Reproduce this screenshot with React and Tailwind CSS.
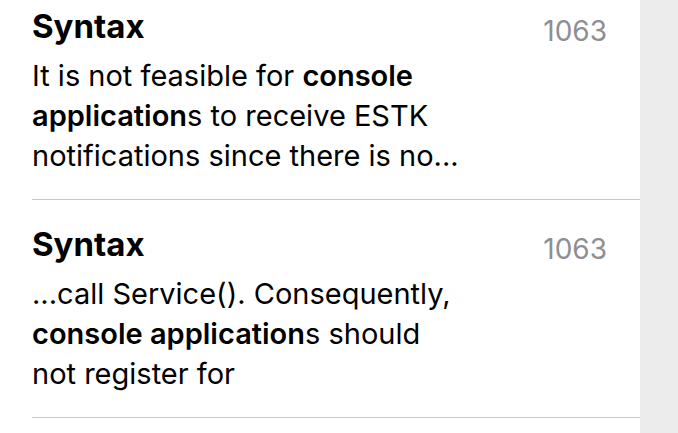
const rows = [
  {
    title: 'Syntax',
    count: '1063',
    body: (
      <>
        It is not feasible for <b className="font-semibold">console application</b>s to receive ESTK notifications since
        there is no...
      </>
    ),
  },
  {
    title: 'Syntax',
    count: '1063',
    body: (
      <>
        ...call Service(). Consequently, <b className="font-semibold">console application</b>s should not register for
      </>
    ),
  },
];

function Row({ title, count, body, first }) {
  return (
    <div className={`border-b border-[#c8c8c8] pr-[33px] pb-[23px] ${first ? 'pt-[6px]' : 'pt-[24px]'}`}>
      <div className="flex h-[40px] items-start justify-between">
        <h2 className="text-[33px] font-bold leading-[40px] text-black">{title}</h2>
        <span className="mt-[10px] text-[28px] leading-[30px] text-[#8e8e93]">{count}</span>
      </div>
      <p className="mt-[10px] w-[432px] text-[29px] leading-[40px] text-black">{body}</p>
    </div>
  );
}

export default function App() {
  return (
    <div className="flex h-[433px] w-[678px] overflow-hidden" style={{ fontFamily: 'Inter, "Noto Sans", sans-serif' }}>
      <div className="w-[640px] shrink-0 bg-white pl-[32px]">
        {rows.map((r, i) => (
          <Row key={i} {...r} first={i === 0} />
        ))}
      </div>
      <div className="flex-1 bg-[#ececec]" />
    </div>
  );
}
